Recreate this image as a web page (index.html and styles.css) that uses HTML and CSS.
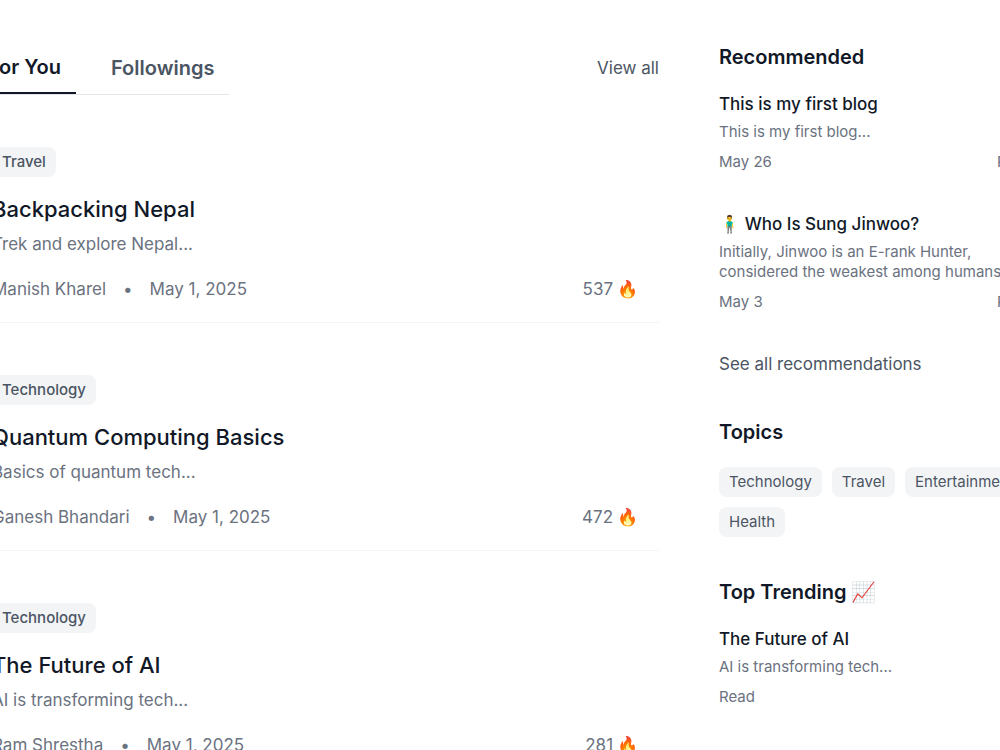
FILE: index.html
```html
<!DOCTYPE html>
<html lang="en">
<head>
<meta charset="utf-8">
<title>Blogs</title>
<link rel="stylesheet" href="styles.css">
</head>
<body>
<div class="page">
  <main class="feed">
    <header class="feed-head">
      <nav class="tabs">
        <button type="button" class="tab active">For You</button>
        <button type="button" class="tab">Followings</button>
      </nav>
      <a class="link" href="#all">View all</a>
    </header>
    <article class="post">
      <a class="chip strong" href="#travel">Travel</a>
      <h2 class="post-title">Backpacking Nepal</h2>
      <p class="post-text">Trek and explore Nepal...</p>
      <div class="meta"><span>Manish Kharel</span><span>•</span><span>May 1, 2025</span><span class="heat">537 🔥</span></div>
    </article>
    <article class="post">
      <a class="chip strong" href="#technology">Technology</a>
      <h2 class="post-title">Quantum Computing Basics</h2>
      <p class="post-text">Basics of quantum tech...</p>
      <div class="meta"><span>Ganesh Bhandari</span><span>•</span><span>May 1, 2025</span><span class="heat">472 🔥</span></div>
    </article>
    <article class="post">
      <a class="chip strong" href="#technology">Technology</a>
      <h2 class="post-title">The Future of AI</h2>
      <p class="post-text">AI is transforming tech...</p>
      <div class="meta"><span>Ram Shrestha</span><span>•</span><span>May 1, 2025</span><span class="heat">281 🔥</span></div>
    </article>
  </main>
  <aside class="side">
    <section class="group">
      <h2 class="side-head">Recommended</h2>
      <div class="cards">
        <article>
          <h3 class="card-title">This is my first blog</h3>
          <p class="card-text">This is my first blog...</p>
          <div class="card-foot"><span>May 26</span><a href="#first">Read</a></div>
        </article>
        <article>
          <h3 class="card-title">🧍‍♂️ Who Is Sung Jinwoo?</h3>
          <p class="card-text">Initially, Jinwoo is an E-rank Hunter, considered the weakest among humans...</p>
          <div class="card-foot"><span>May 3</span><a href="#jinwoo">Read</a></div>
        </article>
        <a class="link" href="#recommendations">See all recommendations</a>
      </div>
    </section>
    <section class="group">
      <h2 class="side-head">Topics</h2>
      <div class="chips">
        <a class="chip" href="#technology">Technology</a>
        <a class="chip" href="#travel">Travel</a>
        <a class="chip" href="#entertainment">Entertainment</a>
        <a class="chip" href="#health">Health</a>
      </div>
    </section>
    <section class="group">
      <h2 class="side-head">Top Trending 📈</h2>
      <article>
        <h3 class="card-title">The Future of AI</h3>
        <p class="card-text">AI is transforming tech...</p>
        <div class="card-foot"><a href="#future">Read</a></div>
      </article>
    </section>
  </aside>
</div>
</body>
</html>
```
FILE: styles.css
```css
* { box-sizing: border-box; }
html { overflow: hidden; }
body {
  margin: 0;
  height: 100vh;
  overflow: hidden;
  background: #fff;
  color: #6b7280;
  font: 17px/25px Inter, "Noto Color Emoji", sans-serif;
}
h2, h3, p { margin: 0; }
a { color: inherit; text-decoration: none; }

.page {
  display: grid;
  grid-template-columns: minmax(0, 1fr) 314px;
  gap: 60px;
  margin: 0 -33px 0 -8px;
  padding-top: 42px;
}

.feed-head {
  display: flex;
  align-items: center;
  justify-content: space-between;
  margin-bottom: 52px;
}
.tabs {
  display: flex;
  gap: 20px;
  margin-left: -19px;
  border-bottom: 1px solid #e5e7eb;
}
.tab {
  padding: 10px 15px;
  border: 0;
  background: none;
  color: #4b5563;
  font: 600 20px/32px Inter, sans-serif;
}
.tab.active {
  padding-top: 9px;
  padding-bottom: 9px;
  border-bottom: 2px solid #111827;
  color: #111827;
}
.link { color: #4b5563; }

.post {
  margin-bottom: 52px;
  padding-bottom: 20px;
  border-bottom: 1px solid #f3f4f6;
}
.chip {
  display: block;
  width: fit-content;
  padding: 5px 10px;
  border-radius: 8px;
  background: #f3f4f6;
  color: #4b5563;
  font-size: 15px;
  line-height: 20px;
}
.chip.strong { font-weight: 500; }
.post-title {
  margin: 15px 0 5px;
  color: #111827;
  font-size: 22px;
  font-weight: 500;
  line-height: 35px;
}
.meta {
  display: flex;
  gap: 17px;
  margin-top: 20px;
}
.heat {
  margin-left: auto;
  padding-right: 20px;
}

.side {
  display: flex;
  flex-direction: column;
  gap: 40px;
}
.side-head {
  margin-bottom: 20px;
  color: #111827;
  font-size: 20px;
  font-weight: 600;
  line-height: 30px;
}
.cards {
  display: flex;
  flex-direction: column;
  gap: 40px;
}
.card-title {
  margin-bottom: 5px;
  color: #111827;
  font-size: 17px;
  font-weight: 500;
  line-height: 25px;
}
.card-text {
  font-size: 15px;
  line-height: 20px;
}
.card-foot {
  display: flex;
  justify-content: space-between;
  margin-top: 10px;
  font-size: 15px;
  line-height: 20px;
}
.chips {
  display: flex;
  flex-wrap: wrap;
  gap: 10px;
}
```
